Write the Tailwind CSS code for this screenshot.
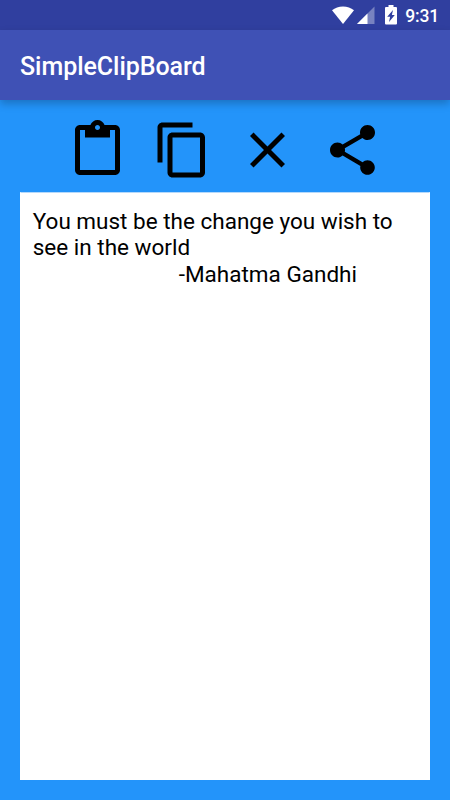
<!DOCTYPE html>
<html lang="en">
<head>
    <meta charset="UTF-8">
    <meta name="viewport" content="width=device-width, initial-scale=1.0">
    <title>SimpleClipBoard</title>
    <script src="https://cdn.jsdelivr.net/npm/@tailwindcss/browser@4"></script>
</head>
<body class="bg-[#2394fa] font-[Roboto,sans-serif]">
    <div class="flex flex-col h-[800px] w-[450px] overflow-hidden">
        <!-- Status bar -->
        <div class="flex items-center justify-end h-[30px] shrink-0 bg-[#303f9f] pr-[11px] text-white">
            <svg class="w-[22px] h-[18px] mr-[3px]" viewBox="0 0 22 18" fill="currentColor">
                <path d="M11 18 0 4.2C3 1.9 6.8.5 11 .5s8 1.4 11 3.7z"/>
            </svg>
            <svg class="w-[18px] h-[18px] mr-[10px]" viewBox="0 0 18 18" fill="currentColor">
                <path d="M0 18 17.5.5V18z" fill-opacity=".35"/>
                <path d="M0 18 10.5 7.5V18z"/>
            </svg>
            <svg class="w-[12px] h-[20px] mr-[8px]" viewBox="0 0 12 20" fill="currentColor">
                <path fill-rule="evenodd" d="M3.5 0h5v2H11a1 1 0 0 1 1 1v15.5a1 1 0 0 1-1 1H1a1 1 0 0 1-1-1V3a1 1 0 0 1 1-1h2.5zM8 5 2.2 11.7H5.1L4 17 9.8 10.1H6.9z"/>
            </svg>
            <span class="text-[17.5px] leading-[30px] font-medium tracking-[-0.15px] pt-[2px]">9:31</span>
        </div>

        <!-- Toolbar -->
        <header class="relative flex items-center h-[70px] shrink-0 bg-[#3f51b5] px-5 pt-[4px] shadow-[0_4px_8px_rgba(0,0,0,0.22)]">
            <h1 class="text-[25px] font-medium text-white tracking-[-0.05px]">SimpleClipBoard</h1>
        </header>

        <!-- Clipboard actions -->
        <div class="flex items-start gap-[25px] pt-5 pl-[68px] h-[92px] shrink-0">
            <button type="button" aria-label="Paste">
                <svg class="w-[60px] h-[60px]" viewBox="0.2 0 24 24"><path d="M19 2h-4.18C14.4.84 13.3 0 12 0c-1.3 0-2.4.84-2.82 2H5c-1.1 0-2 .9-2 2v16c0 1.1.9 2 2 2h14c1.1 0 2-.9 2-2V4c0-1.1-.9-2-2-2zm-7 0c.55 0 1 .45 1 1s-.45 1-1 1-1-.45-1-1 .45-1 1-1zm7 18H5V4h2v3h10V4h2v16z"/></svg>
            </button>
            <button type="button" aria-label="Copy">
                <svg class="w-[60px] h-[60px]" viewBox="0.2 0 24 24"><path d="M16 1H4c-1.1 0-2 .9-2 2v14h2V3h12V1zm3 4H8c-1.1 0-2 .9-2 2v14c0 1.1.9 2 2 2h11c1.1 0 2-.9 2-2V7c0-1.1-.9-2-2-2zm0 16H8V7h11v14z"/></svg>
            </button>
            <button type="button" aria-label="Clear">
                <svg class="w-[60px] h-[60px]" viewBox="0.2 0 24 24"><path d="M19 6.41 17.59 5 12 10.59 6.41 5 5 6.41 10.59 12 5 17.59 6.41 19 12 13.41 17.59 19 19 17.59 13.41 12z"/></svg>
            </button>
            <button type="button" aria-label="Share">
                <svg class="w-[60px] h-[60px]" viewBox="0.2 0 24 24"><path d="M18 16.08c-.76 0-1.44.3-1.96.77L8.91 12.7c.05-.23.09-.46.09-.7s-.04-.47-.09-.7l7.05-4.11c.54.5 1.25.81 2.04.81 1.66 0 3-1.34 3-3s-1.34-3-3-3-3 1.34-3 3c0 .24.04.47.09.7L8.04 9.81C7.5 9.31 6.79 9 6 9c-1.66 0-3 1.34-3 3s1.34 3 3 3c.79 0 1.5-.31 2.04-.81l7.12 4.16c-.05.21-.08.43-.08.65 0 1.61 1.31 2.92 2.92 2.92 1.61 0 2.92-1.31 2.92-2.92s-1.31-2.92-2.92-2.92z"/></svg>
            </button>
        </div>

        <!-- Clipboard text -->
        <div class="grow mx-5 mb-5 bg-white border border-t-[#b5d9fb] border-x-white border-b-white px-[11.75px] pt-[15px] text-[22.5px] leading-[26.4px] text-black">
            <p>You must be the change you wish to see in the world</p>
            <p class="pl-[146px]">-Mahatma Gandhi</p>
        </div>
    </div>
</body>
</html>
